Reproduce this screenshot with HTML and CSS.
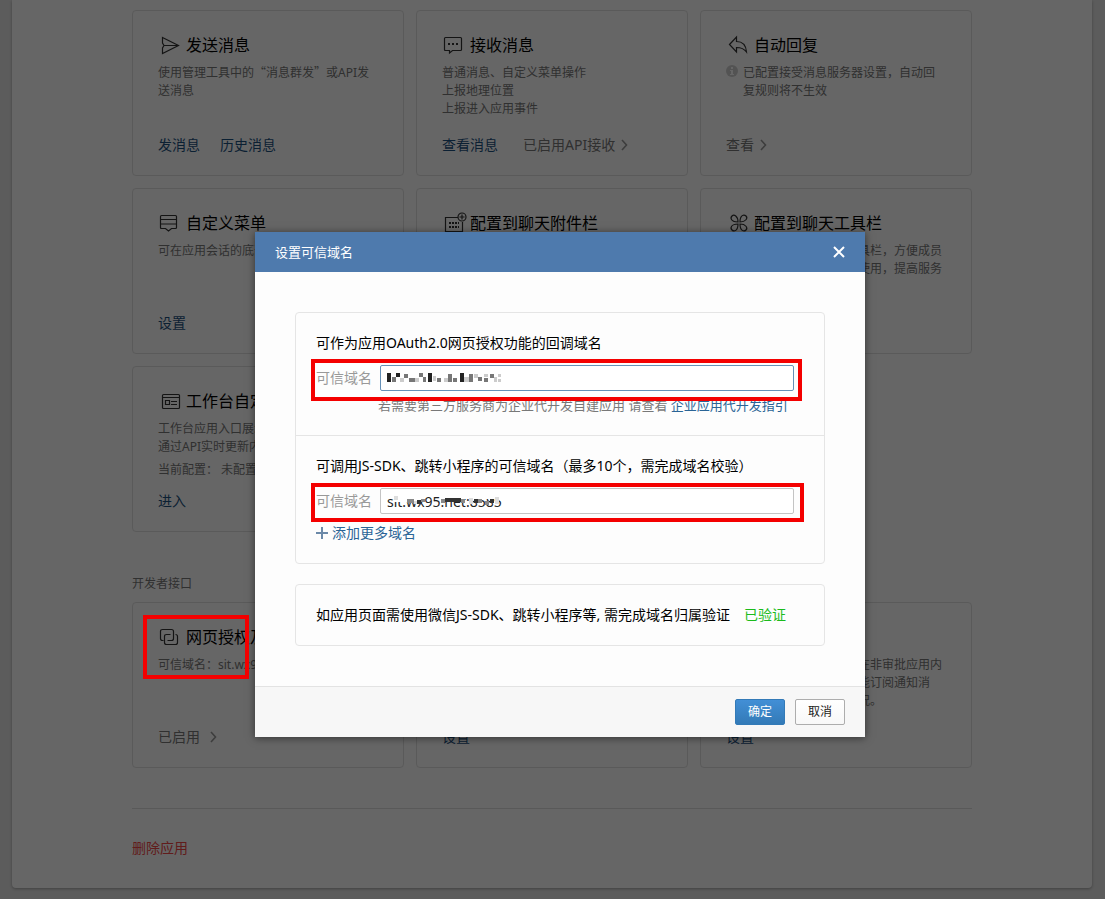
FILE: index.html
```html
<!DOCTYPE html>
<html lang="zh-CN">
<head>
<meta charset="utf-8">
<meta name="viewport" content="width=device-width, initial-scale=1">
<title>设置可信域名</title>
<link rel="stylesheet" href="styles.css">
</head>
<body>
<div class="stage">
  <main class="panel">
    <div class="content">
      <section class="cards">
        <article class="card">
          <h3 class="card-title"><svg class="icon" viewBox="0 0 24 24"><path d="M4.500 4.500L20.500 12.500L4.500 20.500V15L6 12.500L4.500 10ZM6 12.500H20"/></svg>发送消息</h3>
          <p class="desc">使用管理工具中的<span class="quote">“</span>消息群发<span class="quote">”</span>或API发送消息</p>
          <div class="actions"><a href="#">发消息</a><a href="#">历史消息</a></div>
        </article>
        <article class="card">
          <h3 class="card-title"><svg class="icon" viewBox="0 0 24 24"><path d="M3.500 4.500H18.500Q19.500 4.500 19.500 5.500V16.500Q19.500 17.500 18.500 17.500H10.500L7.500 20V17.500H3.500Q2.500 17.500 2.500 16.500V5.500Q2.500 4.500 3.500 4.500Z"/><path class="dots" d="M6 10h2v2H6zM10 10h2v2h-2zM14 10h2v2h-2z"/></svg>接收消息</h3>
          <p class="desc">普通消息、自定义菜单操作<br>上报地理位置<br>上报进入应用事件</p>
          <div class="actions"><a href="#">查看消息</a><a class="muted" href="#">已启用API接收<svg class="chevron" viewBox="0 0 8 12"><path d="M2 1L6.500 6L2 11"/></svg></a></div>
        </article>
        <article class="card">
          <h3 class="card-title"><svg class="icon" viewBox="0 0 24 24"><path d="M3.500 11.500L10.500 4V8.500C16 8.500 20 12 20.500 19C18 15.500 15 14.500 10.500 14.500V19Z"/></svg>自动回复</h3>
          <div class="notice"><svg class="info" viewBox="0 0 12 12"><circle cx="6" cy="6" r="6"/><path d="M5 2h2v2H5zM4 5h3v4h1v1H4V9h1V6H4z"/></svg><p class="desc">已配置接受消息服务器设置，自动回复规则将不生效</p></div>
          <div class="actions"><a class="muted" href="#">查看<svg class="chevron" viewBox="0 0 8 12"><path d="M2 1L6.500 6L2 11"/></svg></a></div>
        </article>
        <article class="card">
          <h3 class="card-title"><svg class="icon" viewBox="0 0 24 24"><path d="M3.500 4.500H17.500Q18.500 4.500 18.500 5.500V16.500Q18.500 17.500 17.500 17.500H13.500L10.500 20L7.500 17.500H3.500Q2.500 17.500 2.500 16.500V5.500Q2.500 4.500 3.500 4.500ZM2.500 8.500H18.500M2.500 13H18.500"/></svg>自定义菜单</h3>
          <p class="desc">可在应用会话的底部配置快捷操作菜单</p>
          <div class="actions"><a href="#">设置</a></div>
        </article>
        <article class="card">
          <h3 class="card-title"><svg class="icon" viewBox="0 0 24 24"><path d="M16 6.500H3.500V20.500H20.500V11"/><circle cx="20" cy="6" r="4"/><path d="M17.500 6H22.500M20 3.500V8.500"/><path class="dots" d="M7 11h2v2H7zM10 11h2v2h-2zM13 11h2v2h-2zM16 11h1v2h-1zM7 15h2v2H7zM10 15h2v2h-2zM13 15h2v2h-2zM16 15h1v2h-1z"/></svg>配置到聊天附件栏</h3>
          <p class="desc">可将应用页面配置到聊天附件栏</p>
          <div class="actions"><a href="#">配置</a></div>
        </article>
        <article class="card">
          <h3 class="card-title"><svg class="icon" viewBox="0 0 24 24"><path d="M12 11C5 11 4 7 6 5C8 3 12 5 12 11ZM14 11C14 4 18 3 20 5C22 7 20 11 14 11ZM12 13C12 20 8 21 6 19C4 17 5 13 12 13ZM14 13C20 13 22 17 20 19C18 21 14 20 14 13Z"/></svg>配置到聊天工具栏</h3>
          <p class="desc">将应用页面配置到聊天工具栏，方便成员与外部客户聊天时查看和使用，提高服务效率</p>
          <div class="actions"><a href="#">配置</a></div>
        </article>
        <article class="card">
          <h3 class="card-title"><svg class="icon" viewBox="0 0 24 24"><rect x="4.500" y="5.500" width="17" height="14" rx="1"/><path d="M4.500 8.500H21.500M7.500 11.500H11.500V15.500H7.500ZM13 12.500H19M13 15.500H19"/></svg>工作台自定义展示</h3>
          <p class="desc">工作台应用入口展示自定义内容，可<br>通过API实时更新内容</p>
          <p class="desc status">当前配置： 未配置</p>
          <div class="actions"><a href="#">进入</a></div>
        </article>
      </section>

      <h2 class="group-title">开发者接口</h2>
      <section class="cards">
        <article class="card">
          <h3 class="card-title"><svg class="icon" viewBox="0 0 24 24"><path d="M5.500 15.500H4.500Q2.500 15.500 2.500 13.500V6.500Q2.500 4.500 4.500 4.500H13.500Q15.500 4.500 15.500 6.500V13.500Q15.500 15.500 13.500 15.500H9.500M12.500 9.500H8.500Q6.500 9.500 6.500 11.500V17.500Q6.500 19.500 8.500 19.500H17.500Q19.500 19.500 19.500 17.500V11.500Q19.500 9.500 17.500 9.500"/></svg>网页授权及JS-SDK</h3>
          <p class="desc">可信域名：sit.wx95.net</p>
          <div class="actions"><a class="muted enabled" href="#">已启用<svg class="chevron" viewBox="0 0 8 12"><path d="M2 1L6.500 6L2 11"/></svg></a></div>
        </article>
        <article class="card">
          <h3 class="card-title">企业微信授权登录</h3>
          <p class="desc">可使用企业微信账号登录</p>
          <div class="actions"><a href="#">设置</a></div>
        </article>
        <article class="card">
          <h3 class="card-title">审批接口</h3>
          <p class="desc">自建应用可接入审批流程在非审批应用内<br>使用审批能力，应用还可能订阅通知消<br>息，及时了解审批单的状况。</p>
          <div class="actions"><a href="#">设置</a></div>
        </article>
      </section>
      <div class="danger"><a href="#">删除应用</a></div>
    </div>
  </main>

  <div class="overlay">
    <div class="dialog" role="dialog" aria-modal="true" aria-labelledby="dialog-title">
      <header class="dialog-head">
        <h1 id="dialog-title">设置可信域名</h1>
        <button class="close" type="button" aria-label="关闭"><svg viewBox="0 0 12 12"><path d="M1 1L11 11M11 1L1 11"/></svg></button>
      </header>
      <div class="dialog-body">
        <div class="box">
          <section class="part">
            <p class="part-title">可作为应用OAuth2.0网页授权功能的回调域名</p>
            <div class="field">
              <label for="oauth">可信域名</label>
              <div class="control">
                <input class="active" id="oauth" type="text">
                <svg class="mosaic" viewBox="0 0 114 10"><path fill="#222" d="M0 0h4v9H0zM9 0h4v4H9zM41 0h4v9h-4zM73 0h4v9h-4z"/><path fill="#777" d="M5 4h4v5H5zM17 1h4v4h-4zM22 5h6v4h-6zM32 0h4v4h-4zM36 4h3v5h-3zM50 5h4v4h-4zM61 1h4v8h-4zM66 5h4v4h-4zM82 1h4v8h-4zM91 4h4v4h-4zM97 5h4v4h-4zM103 1h4v4h-4z"/><path fill="#ccc" d="M13 5h4v4h-4zM28 5h4v4h-4zM46 3h3v5h-3zM57 5h4v4h-4zM77 4h5v5h-5zM87 1h4v4h-4zM97 1h4v3h-4zM107 4h3v5h-3zM111 1h3v3h-3zM111 6h3v3h-3z"/></svg>
              </div>
              <span class="mark mark-first"></span>
            </div>
            <p class="hint">若需要第三方服务商为企业代开发自建应用 请查看 <a href="#">企业应用代开发指引</a></p>
          </section>
          <section class="part">
            <p class="part-title">可调用JS-SDK、跳转小程序的可信域名（最多10个，需完成域名校验）</p>
            <div class="field">
              <label for="sdk">可信域名</label>
              <div class="control">
                <input id="sdk" type="text" value="sit.wx95.net:8585">
                <svg class="mosaic" viewBox="0 0 114 10"><path fill="#fff" d="M7 0h30v6H7zM54 0h60v3H54z"/><path fill="#333" d="M30 4h4v4h-4zM58 2h16v4H58zM87 3h4v4h-4zM103 3h4v4h-4z"/><path fill="#888" d="M20 3h7v4h-7zM34 3h4v3h-4zM54 3h4v4h-4zM74 3h4v4h-4zM91 3h4v4h-4zM98 5h4v4h-4z"/><path fill="#ddd" d="M7 0h4v4H7zM27 5h3v3h-3zM82 2h4v6h-4zM108 1h4v7h-4z"/></svg>
              </div>
              <span class="mark mark-second"></span>
            </div>
            <a class="add" href="#"><svg viewBox="0 0 12 12"><path d="M6 0V12M0 6H12"/></svg>添加更多域名</a>
          </section>
        </div>
        <div class="box verify"><span>如应用页面需使用微信JS-SDK、跳转小程序等, 需完成域名归属验证</span><span class="ok">已验证</span></div>
      </div>
      <footer class="dialog-foot">
        <button class="btn primary" type="button">确定</button>
        <button class="btn" type="button">取消</button>
      </footer>
    </div>
  </div>
  <span class="mark mark-card"></span>
</div>
</body>
</html>
```
FILE: styles.css
```css
* { box-sizing: border-box; }

body {
  margin: 0;
  background: #e6e6e6;
  color: #000;
  font: 14px/20px "Noto Sans", "Noto Sans CJK SC", sans-serif;
}

h1, h2, h3, p { margin: 0; font-weight: 400; }
a { color: #2a6496; text-decoration: none; }
button, input { font: inherit; }

.stage { position: relative; padding: 0 13px 11px 12px; }

.panel {
  padding: 10px 20px 30px;
  background: #fff;
  border-radius: 0 0 4px 4px;
  box-shadow: 0 1px 3px rgba(0, 0, 0, .3);
}
.content { max-width: 840px; margin: 0 auto; }

.cards { display: grid; grid-template-columns: repeat(3, 1fr); gap: 12px; }
.card {
  display: flex;
  flex-direction: column;
  min-height: 166px;
  padding: 22px 25px 20px;
  border: 1px solid #e0e0e0;
  border-radius: 4px;
}
.card-title {
  display: flex;
  align-items: center;
  gap: 4px;
  margin-bottom: 7px;
  font-size: 16px;
  line-height: 24px;
  white-space: nowrap;
}
.icon { width: 24px; height: 24px; overflow: visible; fill: none; stroke: #333; stroke-width: 1.2; }
.icon .dots { fill: #333; stroke: none; }
.desc { font-size: 12px; line-height: 18px; color: #787878; }
.quote { font-family: "Noto Sans CJK SC", sans-serif; line-height: 12px; }
.status { margin-top: 5px; white-space: pre; }
.notice { display: flex; gap: 5px; padding-right: 8px; }
.info { flex: none; width: 12px; height: 12px; margin-top: 1px; fill: #d0d0d0; }
.info path { fill: #fff; }
.actions { display: flex; gap: 20px; margin-top: auto; }
.actions a { display: flex; align-items: center; color: #1d527f; }
.actions .muted { gap: 5px; margin-left: 5px; color: #787878; }
.actions .muted:first-child { margin-left: 0; }
.actions .enabled { gap: 9px; }
.chevron { width: 8px; height: 12px; fill: none; stroke: #999; stroke-width: 1.6; }

.group-title { margin: 43px 0 9px; font-size: 12px; line-height: 18px; color: #787878; }
.danger { margin-top: 40px; padding-top: 29px; border-top: 1px solid #dedede; }
.danger a { color: #f24848; }

.overlay {
  position: absolute;
  inset: 0;
  display: flex;
  justify-content: center;
  align-items: flex-start;
  padding: 232px 0 0 15px;
  background: rgba(0, 0, 0, .6);
}
.dialog { width: 610px; background: #fdfdfd; box-shadow: 0 1px 8px rgba(0, 0, 0, .5); }
.dialog-head {
  display: flex;
  align-items: center;
  justify-content: space-between;
  height: 40px;
  padding: 0 20px;
  background: #4e7aad;
  color: #fff;
}
.dialog-head h1 { font-size: 13px; }
.close { display: flex; padding: 0; border: 0; background: none; }
.close svg { width: 12px; height: 12px; fill: none; stroke: #fff; stroke-width: 2; }
.dialog-body { display: grid; gap: 20px; padding: 40px; }
.box { border: 1px solid #e5e5e5; border-radius: 4px; }
.part { padding: 20px; }
.part + .part { border-top: 1px solid #e5e5e5; }
.field { position: relative; display: flex; align-items: center; gap: 8px; margin-top: 12px; padding-right: 10px; }
.field label { color: #999; }
.control { position: relative; flex: 1; }
.control input {
  display: block;
  width: 100%;
  height: 26px;
  padding: 0 6px;
  border: 1px solid #c4c4c4;
  border-radius: 2px;
  background: #fff;
  color: #222;
  outline: none;
}
.control .active { border-color: #6590b7; }
.mosaic { position: absolute; left: 7px; top: 8px; width: 114px; height: 10px; }
.hint { margin: 5px 0 1px 62px; font-size: 13px; line-height: 18px; color: #787878; white-space: nowrap; }
.add { display: flex; align-items: center; gap: 4px; margin-top: 9px; }
.add svg { width: 12px; height: 12px; stroke: #6b89a8; stroke-width: 2; }
.verify { display: flex; gap: 14px; padding: 20px; }
.ok { color: #1cbb1c; }
.dialog-foot {
  display: flex;
  justify-content: flex-end;
  gap: 10px;
  padding: 12px 20px;
  border-top: 1px solid #e3e3e3;
  background: #f7f7f7;
}
.btn {
  width: 50px;
  height: 26px;
  padding: 0;
  border: 1px solid #adadad;
  border-radius: 2px;
  background: linear-gradient(#fff, #f8f8f8);
  color: #222;
  font-size: 12px;
}
.primary { border-color: #337ab7; background: linear-gradient(#428fd6, #337ab7); color: #fff; }

/* Red highlight frames laid over the page */
.mark { position: absolute; border: 4px solid #f40000; pointer-events: none; }
.mark-first { inset: -6px 2px -10px -5px; }
.mark-second { inset: -5px 0 -8px -5px; }
.mark-card { left: 143px; top: 615px; width: 106px; height: 64px; }
```
